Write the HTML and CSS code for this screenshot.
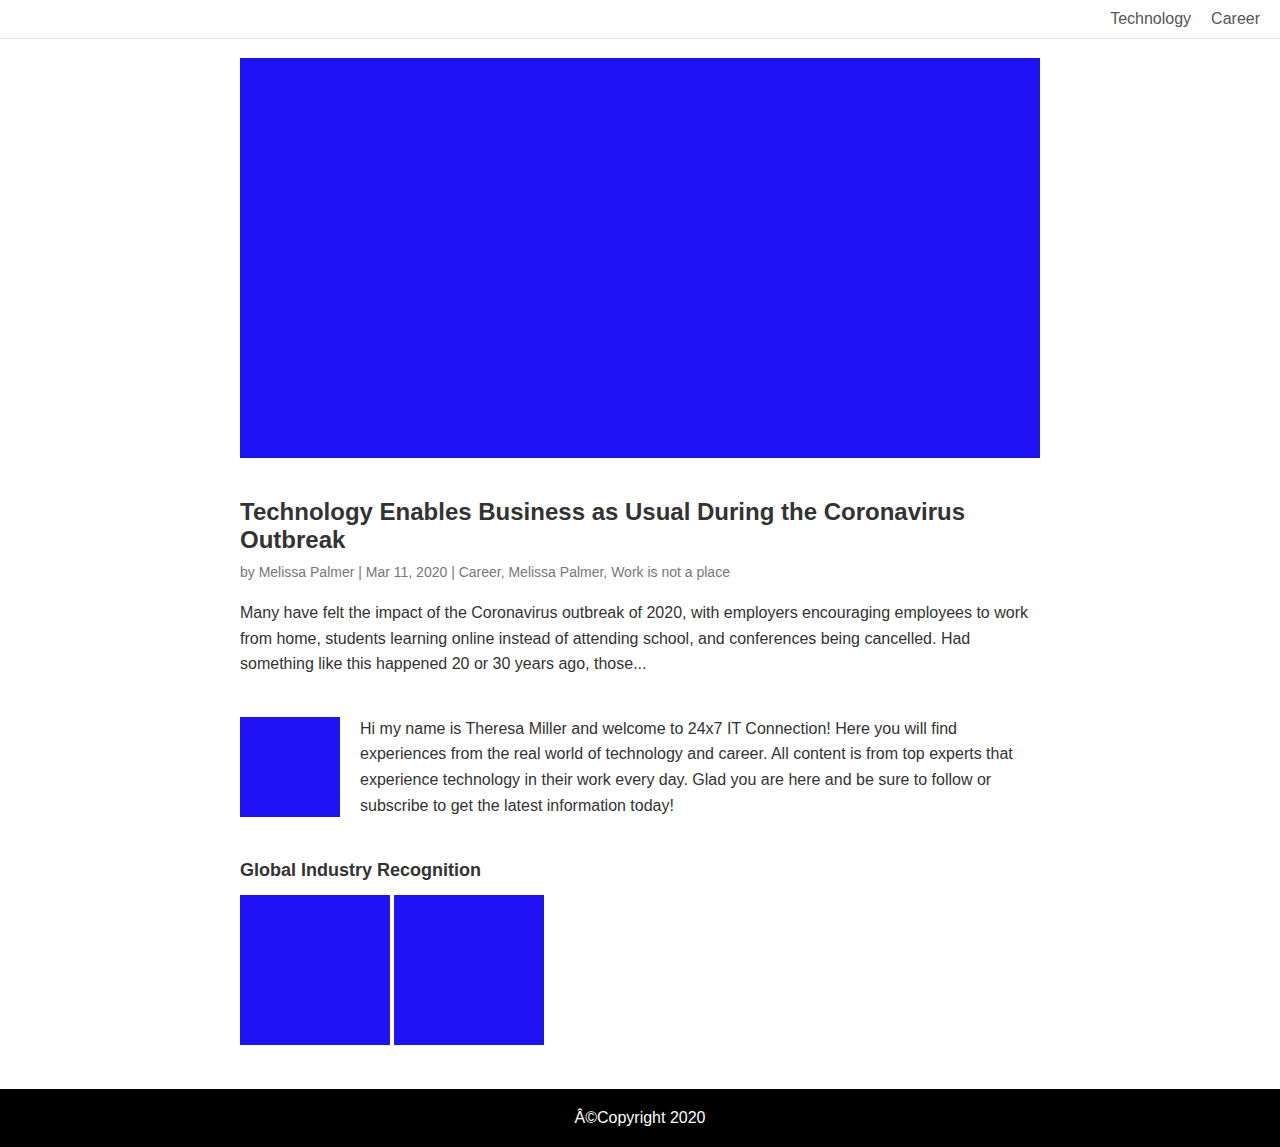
FILE: index.html
```html
<!DOCTYPE html>
<html lang="en">
<head>
<meta charset="utf-8">
<title>24x7 IT Connection</title>
<link rel="stylesheet" href="styles.css">
</head>
<body>
<header class="site-header">
  <nav class="nav">
    <a class="nav-link" href="#">Technology</a>
    <a class="nav-link" href="#">Career</a>
  </nav>
</header>
<main class="main">
  <article class="post">
    <div class="hero"></div>
    <h2 class="post-title">Technology Enables Business as Usual During the Coronavirus Outbreak</h2>
    <p class="post-meta">by Melissa Palmer | Mar 11, 2020 | Career, Melissa Palmer, Work is not a place</p>
    <p class="post-excerpt">Many have felt the impact of the Coronavirus outbreak of 2020, with employers encouraging employees to work from home, students learning online instead of attending school, and conferences being cancelled. Had something like this happened 20 or 30 years ago, those...</p>
  </article>
  <section class="about">
    <div class="about-img"></div>
    <p class="about-text">Hi my name is Theresa Miller and welcome to 24x7 IT Connection! Here you will find experiences from the real world of technology and career. All content is from top experts that experience technology in their work every day. Glad you are here and be sure to follow or subscribe to get the latest information today!</p>
  </section>
  <section class="recognition">
    <h4 class="rec-title">Global Industry Recognition</h4>
    <div class="badges">
      <div class="badge"></div>
      <div class="badge"></div>
    </div>
  </section>
</main>
<footer class="footer">Â©Copyright 2020</footer>
</body>
</html>
```
FILE: styles.css
```css
* { box-sizing: border-box; }
html, body { margin: 0; padding: 0; }
body {
  font-family: "Liberation Sans", Arial, sans-serif;
  color: #333;
  background: #fff;
}
.site-header {
  height: 39px;
  border-bottom: 1px solid #e2e2e2;
  display: flex;
  justify-content: flex-end;
  align-items: center;
  padding: 0 20px 1px;
}
.nav { display: flex; gap: 20px; }
.nav-link {
  color: #555;
  text-decoration: none;
  font-size: 16px;
  line-height: 20px;
}
.main {
  width: 800px;
  margin: 0 auto;
  padding: 19px 0 44px;
}
.hero { height: 400px; background: #1e12f7; }
.post-title {
  margin: 40px 0 0;
  font-size: 24px;
  line-height: 28px;
  font-weight: bold;
  color: #333;
}
.post-meta {
  margin: 8px 0 0;
  font-size: 14px;
  line-height: 20px;
  color: #777;
}
.post-excerpt {
  margin: 18px 0 0;
  font-size: 16px;
  line-height: 25.6px;
  color: #333;
}
.about {
  display: flex;
  gap: 20px;
  margin-top: 40px;
}
.about-img { flex: 0 0 100px; height: 100px; background: #1e12f7; }
.about-text {
  margin: -1px 0 0;
  font-size: 16px;
  line-height: 25.6px;
}
.recognition { margin-top: 41px; }
.rec-title {
  margin: 0;
  font-size: 18px;
  line-height: 22px;
  font-weight: bold;
}
.badges { display: flex; gap: 4px; margin-top: 14px; }
.badge { width: 150px; height: 150px; background: #1e12f7; }
.footer {
  background: #000;
  color: #fff;
  height: 58px;
  display: flex;
  align-items: center;
  justify-content: center;
  font-size: 16px;
}
```
